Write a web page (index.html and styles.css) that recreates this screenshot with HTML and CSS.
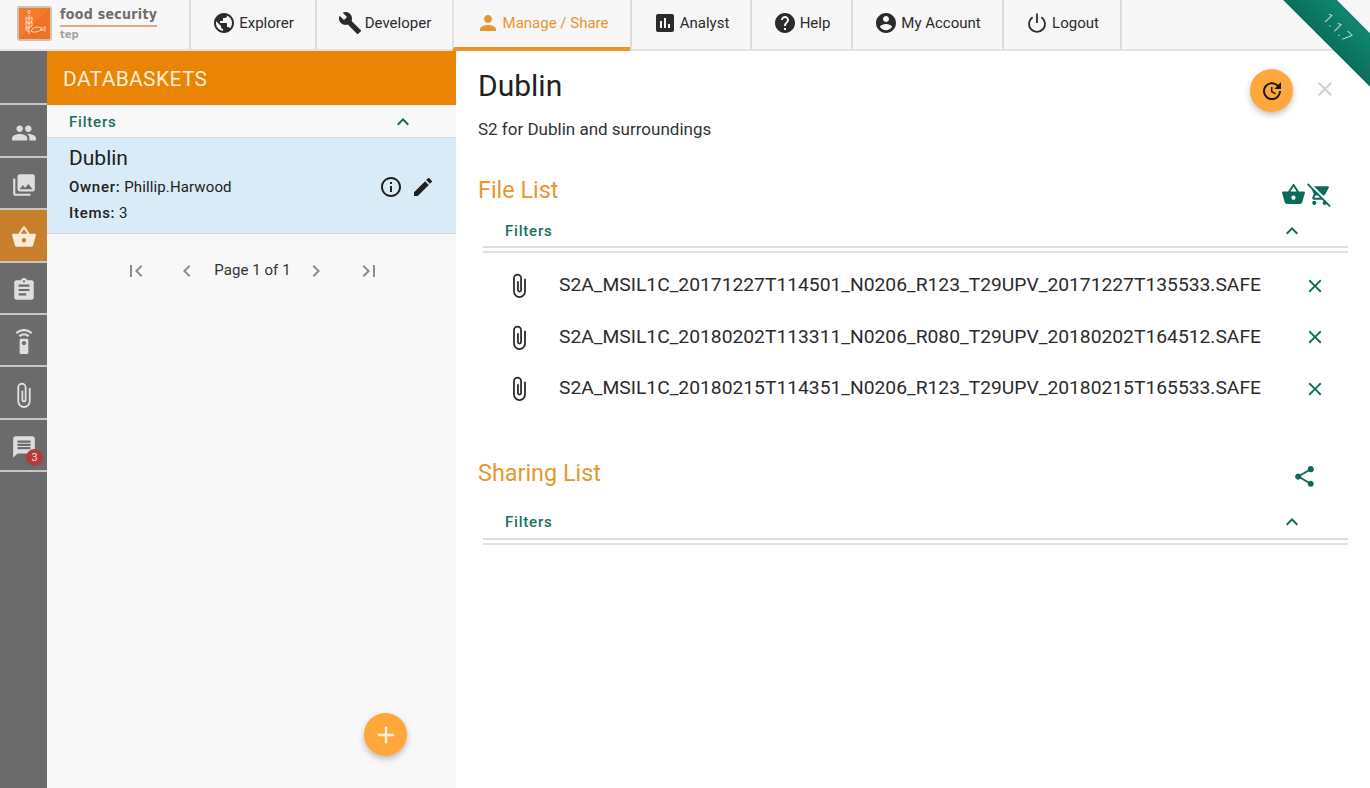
FILE: index.html
```html
<!DOCTYPE html>
<html>
	<head>
		<meta charset="utf-8" />
		<title>Food Security TEP</title>
		<link rel="stylesheet" href="styles.css">
	</head>

	<body>
		<svg class="sprite" xmlns="http://www.w3.org/2000/svg">
			<symbol id="i-public" viewBox="0 0 24 24"><path d="M12 2C6.48 2 2 6.48 2 12s4.48 10 10 10 10-4.48 10-10S17.52 2 12 2zm-1 17.93c-3.95-.49-7-3.85-7-7.93 0-.62.08-1.21.21-1.79L9 15v1c0 1.1.9 2 2 2v1.93zm6.9-2.54c-.26-.81-1-1.39-1.9-1.39h-1v-3c0-.55-.45-1-1-1H8v-2h2c.55 0 1-.45 1-1V7h2c1.1 0 2-.9 2-2v-.41c2.93 1.19 5 4.06 5 7.41 0 2.08-.8 3.97-2.1 5.39z"/></symbol>
			<symbol id="i-build" viewBox="0 0 24 24"><path d="M22.7 19l-9.1-9.1c.9-2.3.4-5-1.5-6.9-2-2-5-2.4-7.4-1.3L9 6 6 9 1.6 4.7C.4 7.1.9 10.1 2.9 12.1c1.9 1.9 4.6 2.4 6.9 1.5l9.1 9.1c.4.4 1 .4 1.4 0l2.3-2.3c.5-.4.5-1.1.1-1.4z"/></symbol>
			<symbol id="i-person" viewBox="0 0 24 24"><path d="M12 12c2.21 0 4-1.79 4-4s-1.79-4-4-4-4 1.79-4 4 1.79 4 4 4zm0 2c-2.67 0-8 1.34-8 4v2h16v-2c0-2.66-5.33-4-8-4z"/></symbol>
			<symbol id="i-chart" viewBox="0 0 24 24"><path d="M19 3H5c-1.1 0-2 .9-2 2v14c0 1.1.9 2 2 2h14c1.1 0 2-.9 2-2V5c0-1.1-.9-2-2-2zM9 17H7v-7h2v7zm4 0h-2V7h2v10zm4 0h-2v-4h2v4z"/></symbol>
			<symbol id="i-help" viewBox="0 0 24 24"><path d="M12 2C6.48 2 2 6.48 2 12s4.48 10 10 10 10-4.48 10-10S17.52 2 12 2zm1 17h-2v-2h2v2zm2.07-7.75l-.9.92C13.45 12.9 13 13.5 13 15h-2v-.5c0-1.1.45-2.1 1.17-2.83l1.24-1.26c.37-.36.59-.86.59-1.41 0-1.1-.9-2-2-2s-2 .9-2 2H8c0-2.21 1.79-4 4-4s4 1.79 4 4c0 .88-.36 1.68-.93 2.25z"/></symbol>
			<symbol id="i-account" viewBox="0 0 24 24"><path d="M12 2C6.48 2 2 6.48 2 12s4.48 10 10 10 10-4.48 10-10S17.52 2 12 2zm0 3c1.66 0 3 1.34 3 3s-1.34 3-3 3-3-1.34-3-3 1.34-3 3-3zm0 14.2c-2.5 0-4.71-1.28-6-3.22.03-1.99 4-3.08 6-3.08 1.99 0 5.97 1.09 6 3.08-1.29 1.94-3.5 3.22-6 3.22z"/></symbol>
			<symbol id="i-power" viewBox="0 0 24 24"><path d="M7.6 6.200a8 8 0 1 0 8.800 0M12 2.500v9.500" fill="none" stroke="currentColor" stroke-width="1.800"/></symbol>
			<symbol id="i-group" viewBox="0 0 24 24"><path d="M16 11c1.66 0 2.99-1.34 2.99-3S17.66 5 16 5c-1.66 0-3 1.34-3 3s1.34 3 3 3zm-8 0c1.66 0 2.99-1.34 2.99-3S9.66 5 8 5C6.34 5 5 6.34 5 8s1.34 3 3 3zm0 2c-2.33 0-7 1.17-7 3.5V19h14v-2.5c0-2.33-4.67-3.5-7-3.5zm8 0c-.29 0-.62.02-.97.05 1.16.84 1.97 1.97 1.97 3.45V19h6v-2.5c0-2.33-4.67-3.5-7-3.5z"/></symbol>
			<symbol id="i-photos" viewBox="0 0 24 24"><path d="M22 16V4c0-1.1-.9-2-2-2H8c-1.1 0-2 .9-2 2v12c0 1.1.9 2 2 2h12c1.1 0 2-.9 2-2zm-11-4l2.03 2.71L16 11l4 5H8l3-4zM2 6v14c0 1.1.9 2 2 2h14v-2H4V6H2z"/></symbol>
			<symbol id="i-basket" viewBox="0 0 24 24"><path d="M17.21 9l-4.38-6.56c-.19-.28-.51-.42-.83-.42-.32 0-.64.14-.83.43L6.79 9H2c-.55 0-1 .45-1 1 0 .09.01.18.04.27l2.54 9.27c.23.84 1 1.46 1.92 1.46h13c.92 0 1.69-.62 1.93-1.46l2.54-9.27L23 10c0-.55-.45-1-1-1h-4.79zM9 9l3-4.4L15 9H9zm3 8c-1.1 0-2-.9-2-2s.9-2 2-2 2 .9 2 2-.9 2-2 2z"/></symbol>
			<symbol id="i-clipboard" viewBox="0 0 24 24"><path d="M19 3h-4.18C14.4 1.84 13.3 1 12 1c-1.3 0-2.4.84-2.82 2H5c-1.1 0-2 .9-2 2v14c0 1.1.9 2 2 2h14c1.1 0 2-.9 2-2V5c0-1.1-.9-2-2-2zm-7 0c.55 0 1 .45 1 1s-.45 1-1 1-1-.45-1-1 .45-1 1-1zm2 14H7v-2h7v2zm3-4H7v-2h10v2zm0-4H7V7h10v2z"/></symbol>
			<symbol id="i-remote" viewBox="0 0 24 24"><path d="M15 9H9c-.55 0-1 .45-1 1v12c0 .55.45 1 1 1h6c.55 0 1-.45 1-1V10c0-.55-.45-1-1-1zm-3 6c-1.1 0-2-.9-2-2s.9-2 2-2 2 .9 2 2-.9 2-2 2zM7.05 6.05l1.41 1.41C9.37 6.56 10.62 6 12 6s2.63.56 3.54 1.46l1.41-1.41C15.68 4.78 13.93 4 12 4s-3.68.78-4.95 2.05zM12 0C8.96 0 6.21 1.23 4.22 3.22l1.41 1.41C7.26 3.01 9.51 2 12 2s4.74 1.01 6.36 2.64l1.41-1.41C17.79 1.23 15.04 0 12 0z"/></symbol>
			<symbol id="i-clip" viewBox="0 0 24 24"><path d="M10.500 8v8.400a1.500 1.500 0 0 0 3 0V5a3.400 3.400 0 0 0-6.800 0v12.800a5.300 5.300 0 0 0 10.600 0V5.500" fill="none" stroke="currentColor" stroke-width="1.700"/></symbol>
			<symbol id="i-message" viewBox="0 0 24 24"><path d="M20 2H4c-1.1 0-1.99.9-1.99 2L2 22l4-4h14c1.1 0 2-.9 2-2V4c0-1.1-.9-2-2-2zm-2 12H6v-2h12v2zm0-3H6V9h12v2zm0-3H6V6h12v2z"/></symbol>
			<symbol id="i-less" viewBox="0 0 24 24"><path d="M12 8l-6 6 1.41 1.41L12 10.83l4.59 4.58L18 14z"/></symbol>
			<symbol id="i-info" viewBox="0 0 24 24"><path d="M11 7h2v2h-2zm0 4h2v6h-2zm1-9C6.48 2 2 6.48 2 12s4.48 10 10 10 10-4.48 10-10S17.52 2 12 2zm0 18c-4.41 0-8-3.59-8-8s3.59-8 8-8 8 3.59 8 8-3.59 8-8 8z"/></symbol>
			<symbol id="i-edit" viewBox="0 0 24 24"><path d="M3 17.25V21h3.75L17.81 9.94l-3.75-3.75L3 17.25zM20.71 7.04c.39-.39.39-1.02 0-1.41l-2.34-2.34c-.39-.39-1.02-.39-1.41 0l-1.83 1.83 3.75 3.75 1.83-1.83z"/></symbol>
			<symbol id="i-first" viewBox="0 0 24 24"><path d="M18.41 16.59L13.82 12l4.59-4.59L17 6l-6 6 6 6zM6 6h2v12H6z"/></symbol>
			<symbol id="i-prev" viewBox="0 0 24 24"><path d="M15.41 7.41L14 6l-6 6 6 6 1.41-1.41L10.83 12z"/></symbol>
			<symbol id="i-next" viewBox="0 0 24 24"><path d="M10 6L8.59 7.41 13.17 12l-4.58 4.59L10 18l6-6z"/></symbol>
			<symbol id="i-last" viewBox="0 0 24 24"><path d="M5.59 7.41L10.18 12l-4.59 4.59L7 18l6-6-6-6zM16 6h2v12h-2z"/></symbol>
			<symbol id="i-close" viewBox="0 0 24 24"><path d="M19 6.41L17.59 5 12 10.59 6.41 5 5 6.41 10.59 12 5 17.59 6.41 19 12 13.41 17.59 19 19 17.59 13.41 12z"/></symbol>
			<symbol id="i-update" viewBox="0 0 24 24"><path d="M21 10.12h-6.78l2.74-2.82c-2.73-2.7-7.15-2.8-9.88-.1-2.73 2.71-2.73 7.08 0 9.79s7.15 2.71 9.88 0C18.32 15.65 19 14.08 19 12.1h2c0 1.98-.88 4.55-2.64 6.29-3.51 3.48-9.21 3.48-12.72 0-3.5-3.47-3.53-9.11-.02-12.58s9.14-3.47 12.65 0L21 3v7.12zM12.5 8v4.25l3.5 2.08-.72 1.21L11 13V8h1.5z"/></symbol>
			<symbol id="i-uncart" viewBox="0 0 24 24"><path d="M22.73 22.73L2.77 2.77 2 2l-.73-.73L0 2.54l4.39 4.39 2.21 4.66-1.35 2.45c-.16.28-.25.61-.25.96 0 1.1.9 2 2 2h7.46l1.38 1.38c-.5.36-.83.95-.83 1.62 0 1.1.89 2 1.99 2 .67 0 1.26-.33 1.62-.84L21.46 24l1.27-1.27zM7.42 15c-.14 0-.25-.11-.25-.25l.03-.12.9-1.63h2.36l2 2H7.42zm8.13-2c.75 0 1.41-.41 1.75-1.03l3.58-6.49c.08-.14.12-.31.12-.48 0-.55-.45-1-1-1H6.54l9.01 9zM7 18c-1.1 0-1.99.9-1.99 2S5.9 22 7 22s2-.9 2-2-.9-2-2-2z"/></symbol>
			<symbol id="i-share" viewBox="0 0 24 24"><path d="M18 16.08c-.76 0-1.44.3-1.96.77L8.91 12.7c.05-.23.09-.46.09-.7s-.04-.47-.09-.7l7.05-4.11c.54.5 1.25.81 2.04.81 1.66 0 3-1.34 3-3s-1.34-3-3-3-3 1.34-3 3c0 .24.04.47.09.7L8.04 9.81C7.5 9.31 6.79 9 6 9c-1.66 0-3 1.34-3 3s1.34 3 3 3c.79 0 1.5-.31 2.04-.81l7.12 4.16c-.05.21-.08.43-.08.65 0 1.61 1.31 2.92 2.92 2.92 1.61 0 2.92-1.31 2.92-2.92s-1.31-2.92-2.92-2.92z"/></symbol>
			<symbol id="i-plus" viewBox="0 0 24 24"><path d="M19 13h-6v6h-2v-6H5v-2h6V5h2v6h6v2z"/></symbol>
		</svg>

		<header class="topbar">
			<div class="brand">
				<svg class="brand-logo" viewBox="0 0 35 35">
					<rect x="1" y="1" width="33" height="33" rx="2" fill="#f47b2c" stroke="#cfc0b4" stroke-width="2"/>
					<path d="M2 33L33 2v31z" fill="#ee7126"/>
					<g fill="none" stroke="#fbdcc2" stroke-width="1">
						<path d="M12 9v19M12 13l-3-2v4l3 2M12 13l3-2v4l-3 2M12 18l-3-2v4l3 2M12 18l3-2v4l-3 2M12 23l-3-2v3l3 2M12 8l-1.500-2 1.500-2 1.500 2z"/>
						<path d="M14 25c2-4 7-5 10-3 2 .8 3-.5 4-1.500 0 1.500 0 4 0 5-1-1-2-2-4-1.500-3 2-8 3-10 1z"/>
						<circle cx="24" cy="23.500" r=".6"/>
					</g>
				</svg>
				<div class="brand-text">
					<div class="brand-name">food security</div>
					<div class="brand-sub">tep</div>
				</div>
			</div>
			<nav class="mainnav">
				<a class="navitem nav-explorer"><svg class="ico"><use href="#i-public"/></svg>Explorer</a>
				<a class="navitem nav-developer"><svg class="ico"><use href="#i-build"/></svg>Developer</a>
				<a class="navitem nav-manage active"><svg class="ico"><use href="#i-person"/></svg>Manage / Share</a>
				<a class="navitem nav-analyst"><svg class="ico"><use href="#i-chart"/></svg>Analyst</a>
				<a class="navitem nav-help"><svg class="ico"><use href="#i-help"/></svg>Help</a>
				<a class="navitem nav-account"><svg class="ico"><use href="#i-account"/></svg>My Account</a>
				<a class="navitem nav-logout"><svg class="ico"><use href="#i-power"/></svg>Logout</a>
			</nav>
		</header>

		<div class="ribbon">1.1.7</div>

		<div class="layout">
			<aside class="sidebar">
				<div class="sideitem"></div>
				<div class="sideitem"><svg class="ico"><use href="#i-group"/></svg></div>
				<div class="sideitem"><svg class="ico"><use href="#i-photos"/></svg></div>
				<div class="sideitem active"><svg class="ico"><use href="#i-basket"/></svg></div>
				<div class="sideitem"><svg class="ico"><use href="#i-clipboard"/></svg></div>
				<div class="sideitem"><svg class="ico"><use href="#i-remote"/></svg></div>
				<div class="sideitem"><svg class="ico"><use href="#i-clip"/></svg></div>
				<div class="sideitem"><svg class="ico"><use href="#i-message"/></svg><span class="badge">3</span></div>
			</aside>

			<section class="listpanel">
				<h2 class="listpanel-title">DATABASKETS</h2>
				<div class="filters-row">
					<span class="filters-label">Filters</span>
					<svg class="ico"><use href="#i-less"/></svg>
				</div>
				<div class="basket-card">
					<div class="basket-info">
						<div class="basket-name">Dublin</div>
						<div class="basket-line"><strong>Owner:</strong> Phillip.Harwood</div>
						<div class="basket-line"><strong>Items:</strong> 3</div>
					</div>
					<div class="basket-actions">
						<svg class="ico"><use href="#i-info"/></svg>
						<svg class="ico"><use href="#i-edit"/></svg>
					</div>
				</div>
				<div class="pager">
					<svg class="ico"><use href="#i-first"/></svg>
					<svg class="ico"><use href="#i-prev"/></svg>
					<span class="pager-text">Page 1 of 1</span>
					<svg class="ico"><use href="#i-next"/></svg>
					<svg class="ico"><use href="#i-last"/></svg>
				</div>
				<button class="fab fab-add"><svg class="ico"><use href="#i-plus"/></svg></button>
			</section>

			<main class="detail">
				<div class="detail-head">
					<h1 class="detail-title">Dublin</h1>
					<button class="fab fab-refresh"><svg class="ico"><use href="#i-update"/></svg></button>
					<svg class="ico detail-close"><use href="#i-close"/></svg>
				</div>
				<p class="detail-desc">S2 for Dublin and surroundings</p>

				<div class="section-head files-head">
					<h3 class="section-title">File List</h3>
					<div class="section-tools">
						<svg class="ico"><use href="#i-basket"/></svg>
						<svg class="ico"><use href="#i-uncart"/></svg>
					</div>
				</div>
				<div class="filters-strip">
					<span class="filters-label">Filters</span>
					<svg class="ico"><use href="#i-less"/></svg>
				</div>
				<ul class="files">
					<li class="file"><svg class="ico file-clip"><use href="#i-clip"/></svg><span class="file-name">S2A_MSIL1C_20171227T114501_N0206_R123_T29UPV_20171227T135533.SAFE</span><svg class="ico file-del"><use href="#i-close"/></svg></li>
					<li class="file"><svg class="ico file-clip"><use href="#i-clip"/></svg><span class="file-name">S2A_MSIL1C_20180202T113311_N0206_R080_T29UPV_20180202T164512.SAFE</span><svg class="ico file-del"><use href="#i-close"/></svg></li>
					<li class="file"><svg class="ico file-clip"><use href="#i-clip"/></svg><span class="file-name">S2A_MSIL1C_20180215T114351_N0206_R123_T29UPV_20180215T165533.SAFE</span><svg class="ico file-del"><use href="#i-close"/></svg></li>
				</ul>

				<div class="section-head sharing-head">
					<h3 class="section-title">Sharing List</h3>
					<div class="section-tools share-tools">
						<svg class="ico"><use href="#i-share"/></svg>
					</div>
				</div>
				<div class="filters-strip strip-sharing">
					<span class="filters-label">Filters</span>
					<svg class="ico"><use href="#i-less"/></svg>
				</div>
			</main>
		</div>
	</body>
</html>
```

FILE: styles.css
```css
* {
	box-sizing: border-box;
}

html,
body {
	height: 100%;
}

body {
	margin: 0;
	overflow: hidden;
	position: relative;
	font-family: Roboto, "Liberation Sans", sans-serif;
	color: #212121;
	background: #fff;
	display: flex;
	flex-direction: column;
}

h1,
h2,
h3,
p,
ul {
	margin: 0;
	padding: 0;
	font-weight: 400;
}

.sprite {
	display: none;
}

.ico {
	width: 24px;
	height: 24px;
	fill: currentColor;
	flex: none;
	display: block;
}

/* top bar */
.topbar {
	height: 51px;
	flex: none;
	display: flex;
	background: #f7f7f7;
	border-bottom: 2px solid #e2e2e2;
}

.brand {
	width: 189px;
	flex: none;
	display: flex;
	align-items: flex-start;
	padding: 6px 0 0 17px;
}

.brand-logo {
	width: 35px;
	height: 35px;
	flex: none;
}

.brand-text {
	margin-left: 8px;
	width: 97px;
	color: #6e6e6e;
}

.brand-name {
	font-family: "DejaVu Sans Condensed", "DejaVu Sans", sans-serif;
	font-weight: 700;
	font-size: 14px;
	line-height: 17px;
	padding-bottom: 2px;
	border-bottom: 2px solid #e8a77e;
	white-space: nowrap;
	letter-spacing: .3px;
}

.brand-sub {
	font-family: "DejaVu Sans Condensed", "DejaVu Sans", sans-serif;
	font-weight: 700;
	font-size: 11px;
	line-height: 14px;
	margin-top: 1px;
	color: #a3a3a3;
}

.mainnav {
	display: flex;
}

.navitem {
	display: flex;
	align-items: center;
	justify-content: center;
	gap: 3px;
	height: 49px;
	padding-bottom: 3px;
	font-size: 15px;
	color: #2b2b2b;
	border-left: 2px solid #dcdcdc;
}

.nav-explorer { width: 126px; }
.nav-developer { width: 137px; }
.nav-manage { width: 178px; }
.nav-analyst { width: 120px; }
.nav-help { width: 101px; }
.nav-account { width: 151px; }
.nav-logout { width: 120px; border-right: 2px solid #dcdcdc; }

.navitem.active {
	color: #e8952f;
	border-bottom: 4px solid #e8972f;
	height: 51px;
	padding-bottom: 1px;
	border-left-color: #e2e2e2;
}

/* version ribbon */
.ribbon {
	position: absolute;
	left: 1240px;
	top: 11px;
	width: 200px;
	height: 38px;
	padding-right: 6px;
	transform: rotate(45deg);
	background: linear-gradient(#10876f, #0b6e5c);
	color: #dff1ec;
	font-size: 14px;
	font-weight: 300;
	letter-spacing: 1px;
	line-height: 38px;
	text-align: center;
	z-index: 5;
}

.layout {
	flex: 1;
	display: flex;
	min-height: 0;
}

/* left icon bar */
.sidebar {
	width: 47px;
	flex: none;
	background: #6b6b6b;
	padding-top: 2px;
}

.sideitem {
	height: 52.400px;
	border-bottom: 2px solid #c6c6c6;
	display: flex;
	align-items: center;
	justify-content: center;
	color: #dedede;
	position: relative;
	padding-top: 4px;
}

.sideitem .ico {
	width: 26px;
	height: 26px;
}

.sideitem.active {
	background: #c87f2b;
	color: #f6ead9;
}

.badge {
	position: absolute;
	left: 26px;
	top: 29px;
	width: 17px;
	height: 17px;
	border-radius: 50%;
	background: #b23a3a;
	color: #f5dede;
	font-size: 11px;
	line-height: 17px;
	text-align: center;
}

/* databasket list */
.listpanel {
	width: 409px;
	flex: none;
	background: #f8f8f8;
	position: relative;
}

.listpanel-title {
	height: 54px;
	background: #e98404;
	color: #fdeeda;
	font-size: 21px;
	letter-spacing: .33px;
	line-height: 56px;
	padding-left: 16px;
}

.filters-row {
	height: 33px;
	display: flex;
	align-items: center;
	justify-content: space-between;
	padding: 1px 41px 0 22px;
	border-bottom: 1px solid #dcdcdc;
	color: #0c6b5b;
}

.filters-label {
	font-size: 15px;
	font-weight: 500;
	letter-spacing: .8px;
	color: #1a6f5f;
}

.basket-card {
	height: 96px;
	background: #d9ebf6;
	border-bottom: 1px solid #cbd6de;
	display: flex;
	justify-content: space-between;
	align-items: center;
	padding: 0 21px 0 22px;
}

.basket-name {
	font-size: 21px;
	line-height: 26px;
	margin-bottom: 3px;
}

.basket-line {
	font-size: 15px;
	line-height: 26px;
	letter-spacing: .13px;
}

.basket-line strong {
	font-weight: 500;
	letter-spacing: .7px;
}

.basket-actions {
	display: flex;
	gap: 8px;
	margin-top: 2px;
}

.pager {
	display: flex;
	align-items: center;
	justify-content: center;
	gap: 1px;
	margin: 25px 0 0 2px;
	color: #8c8c8c;
}

.pager .ico:nth-child(1) { margin-right: 26px; }
.pager .ico:nth-child(2) { margin-right: 14px; }
.pager .ico:nth-child(4) { margin-left: 12px; }
.pager .ico:nth-child(5) { margin-left: 28px; }

.pager-text {
	font-size: 15px;
	letter-spacing: .05px;
	color: #333;
	margin-top: -2px;
}

.fab {
	width: 43px;
	height: 43px;
	border: 0;
	padding: 0;
	border-radius: 50%;
	background: #ffa73b;
	box-shadow: 0 3px 6px rgba(0, 0, 0, .25);
	display: flex;
	align-items: center;
	justify-content: center;
}

.fab-add {
	position: absolute;
	left: 317px;
	bottom: 32px;
	color: #fff3e2;
}

.fab-add .ico {
	width: 28px;
	height: 28px;
}

/* detail pane */
.detail {
	flex: 1;
	padding: 18px 0 0 22px;
	min-width: 0;
	background: #fff;
}

.detail-head {
	display: flex;
	align-items: flex-start;
	height: 45px;
}

.detail-title {
	font-size: 30px;
	line-height: 34px;
	flex: 1;
}

.fab-refresh {
	color: #1d1d1d;
	margin-right: 20px;
}

.detail-close {
	color: #d0d0d0;
	margin: 8px 33px 0 0;
}

.detail-desc {
	font-size: 17px;
	line-height: 22px;
	margin-top: 4px;
	color: #333;
}

.section-head {
	display: flex;
	align-items: center;
	justify-content: space-between;
	padding-right: 38px;
}

.files-head {
	margin-top: 34px;
	height: 32px;
}

.sharing-head {
	margin-top: 42px;
	height: 32px;
}

.section-title {
	font-size: 23.400px;
	line-height: 32px;
	color: #e8972f;
}

.section-tools {
	display: flex;
	gap: 1px;
	color: #0c6b5b;
	margin-top: 9px;
}

.section-tools .ico {
	width: 25px;
	height: 25px;
}

.share-tools {
	margin-right: 15px;
	margin-top: 7px;
}

.filters-strip {
	margin: 9px 22px 0 5px;
	height: 33px;
	display: flex;
	align-items: center;
	justify-content: space-between;
	padding: 0 44px 0 22px;
	color: #0c6b5b;
	border-bottom: 2px solid #dcdcdc;
	position: relative;
}

/* second hairline below the strip */
.filters-strip::after {
	content: "";
	position: absolute;
	left: 0;
	right: 0;
	bottom: -7px;
	height: 2px;
	background: #e2e2e2;
}

.strip-sharing {
	margin-top: 18px;
}

.files {
	list-style: none;
	margin-top: 12px;
}

.file {
	height: 51.500px;
	display: flex;
	align-items: center;
	padding-left: 29px;
}

.file-clip {
	width: 25px;
	height: 25px;
	color: #2a2a2a;
}

.file-name {
	font-size: 19.250px;
	margin: -2px 0 0 27px;
	white-space: nowrap;
	width: 745px;
	color: #2b2b2b;
}

.file-del {
	width: 22px;
	height: 22px;
	color: #0c6b5b;
}
```
